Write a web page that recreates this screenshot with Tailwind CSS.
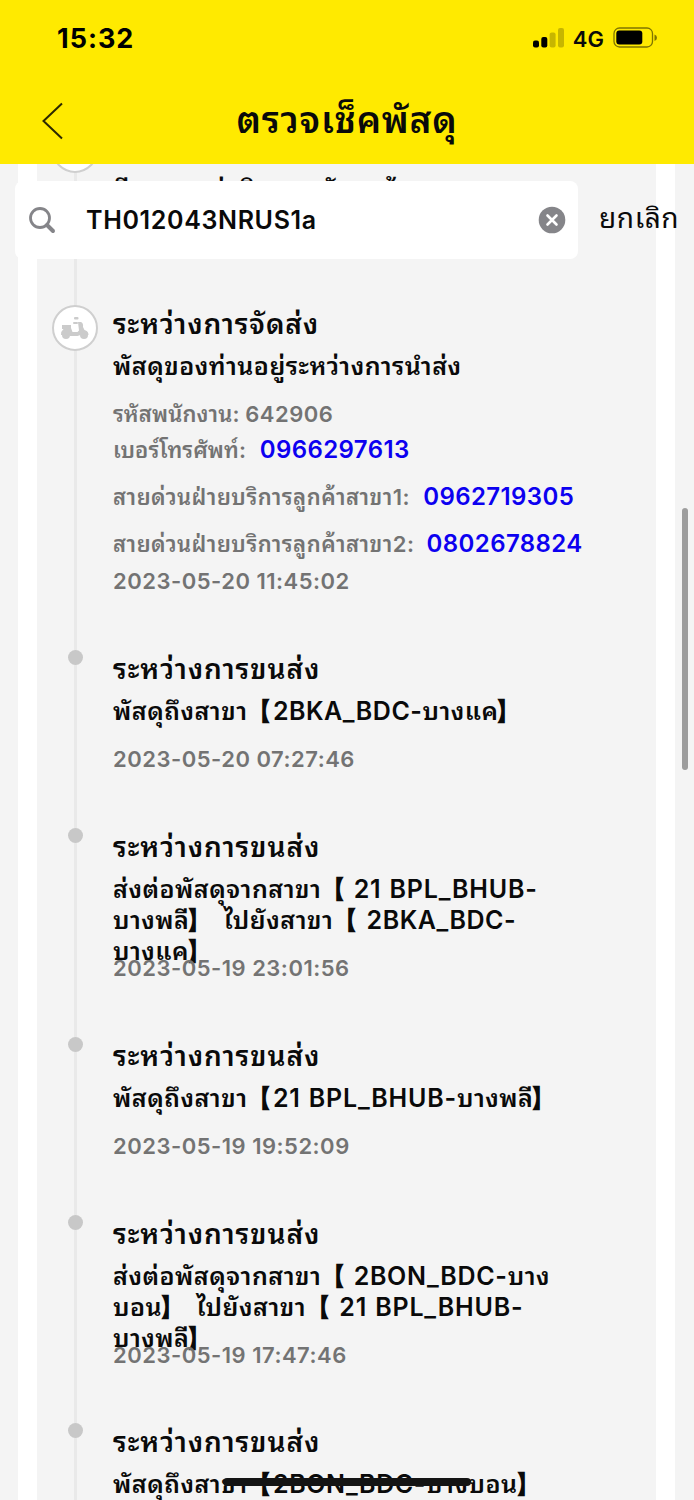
<!DOCTYPE html>
<html lang="th">
<head>
  <meta charset="UTF-8">
  <meta name="viewport" content="width=device-width, initial-scale=1.0">
  <title>ตรวจเช็คพัสดุ</title>
  <script src="https://cdn.jsdelivr.net/npm/@tailwindcss/browser@4"></script>
</head>
<body class="bg-[#f4f4f4] w-[694px] h-[1500px] overflow-hidden relative font-['Inter','Noto_Sans_Thai_Looped','Loma','Noto_Sans_Thai','Noto_Sans',sans-serif] text-[#0a0a0a]">
<!-- Header -->
<header class="relative z-20 h-[164px] bg-[#ffea00]">
  <div class="flex items-center justify-between h-[76px] pl-[57px] pr-[36px]">
    <span class="mt-[2px] text-[27px] font-bold tracking-[1px] text-black">15:32</span>
    <div class="flex items-center">
      <svg class="w-[32px] h-[20px]" viewBox="0 0 32 20">
        <rect x="0" y="12.5" width="6" height="7" rx="2" />
        <rect x="8.3" y="9" width="6" height="10.500" rx="2" />
        <rect x="16.600" y="4.500" width="6" height="15" rx="2" opacity=".22" />
        <rect x="25" y="0" width="6" height="19.500" rx="2" opacity=".22" />
      </svg>
      <span class="ml-[8px] mt-[2px] text-[22px] font-semibold">4G</span>
      <svg class="ml-[9px] w-[45px] h-[22px]" viewBox="0 0 45 22">
        <rect x="1" y="1" width="38.500" height="19" rx="5.500" fill="none" stroke="#000" stroke-opacity=".5" stroke-width="1.300" />
        <rect x="3.300" y="3.500" width="26" height="14" rx="3" />
        <path d="M41.500 7.500q2.500 1 2.500 3.200t-2.500 3.200z" opacity=".5" />
      </svg>
    </div>
  </div>
  <div class="relative flex items-center justify-center h-[88px]">
    <svg class="absolute left-[40px] top-[25px] w-[24px] h-[40px]" viewBox="0 0 24 40" fill="none" stroke="#2c2800" stroke-width="2">
      <path d="M22 2.500 3.500 20 22 37.500" />
    </svg>
    <h1 class="text-[37px] leading-[48px] font-semibold tracking-[0.7px]">ตรวจเช็คพัสดุ</h1>
  </div>
</header>

<!-- Search -->
<div class="absolute z-10 left-[15px] top-[181px] flex items-center">
  <div class="flex items-center w-[563px] h-[78px] rounded-lg bg-white pl-[13px] pr-[12px]">
    <svg class="w-[28px] h-[28px]" viewBox="0 0 28 28" fill="none" stroke="#858589">
      <circle cx="12" cy="12" r="9.500" stroke-width="2.800" />
      <path d="M19 19l6 6" stroke-width="4" stroke-linecap="round" />
    </svg>
    <span class="ml-[30px] mt-[2px] flex-1 text-[25px] font-semibold tracking-[0.65px]">TH012043NRUS1a</span>
    <svg class="w-[28px] h-[28px]" viewBox="0 0 28 28">
      <circle cx="14" cy="14" r="13.300" fill="#858589" />
      <path d="M9.500 9.500l9 9M18.500 9.500l-9 9" stroke="#fff" stroke-width="2.600" stroke-linecap="round" />
    </svg>
  </div>
  <span class="ml-[21px] mb-[4px] text-[28px] font-normal tracking-[0.6px] whitespace-nowrap">ยกเลิก</span>
</div>

<!-- Timeline -->
<main class="h-[1336px] mx-[18px] w-[657px] px-[19px] bg-white overflow-hidden">
  <div class="h-full flow-root bg-[#f4f4f4]">
    <ul class="-mt-[38px] whitespace-nowrap tracking-[0.5px]">
      <li class="flex h-[177px]">
        <div class="relative w-[76px] flex justify-center">
          <div class="w-[3px] h-full bg-[#e9e9e9]"></div>
          <div class="absolute top-[1px] w-[46px] h-[46px] rounded-full border-2 border-[#cfcfcf] bg-white"></div>
        </div>
        <div class="pt-[48px]">
          <p class="text-[25px] leading-[31px] font-semibold">มีรายการส่งสินราคาวันมาค้าง</p>
        </div>
      </li>
      <li class="flex h-[345px]">
        <div class="relative w-[76px] flex justify-center">
          <div class="w-[3px] h-full bg-[#e9e9e9]"></div>
          <div class="absolute top-[2px] w-[46px] h-[46px] rounded-full border-2 border-[#cfcfcf] bg-white flex items-center justify-center">
            <svg class="w-[30px] h-[26px]" viewBox="0 0 30 26" fill="#cbcbcb">
              <rect x="14" y="2" width="4.500" height="2.500" rx="1" />
              <rect x="13" y="7" width="5" height="2" rx="1" />
              <path d="M18 7h3q2.500 1 2 5l1.500 3q4 1 4 5h-8l-3 1h-7.500l-1-1H1q0-4 2.500-6H2V10h9v3l1.500 4h5l1.500-1.500z" />
              <circle cx="6" cy="20" r="4" />
              <circle cx="24" cy="20" r="4" />
            </svg>
          </div>
        </div>
        <div>
          <h2 class="text-[28px] leading-[42px] font-semibold tracking-[0.9px]">ระหว่างการจัดส่ง</h2>
          <p class="mt-[6px] h-[49px] text-[25px] leading-[31px] font-semibold">พัสดุของท่านอยู่ระหว่างการนำส่ง</p>
          <div class="text-[22px] leading-[28px] font-semibold text-[#737373]">
            <p class="tracking-[0.1px]">รหัสพนักงาน: <span class="tracking-[0.5px]">642906</span></p>
            <p class="mt-[8px] tracking-[0.1px]">เบอร์โทรศัพท์: <a class="ml-[8px] text-[24px] tracking-[0.4px] text-[#0c00f0]">0966297613</a></p>
            <p class="mt-[19px]">สายด่วนฝ่ายบริการลูกค้าสาขา1: <a class="ml-[7px] text-[24px] tracking-[0.4px] text-[#0c00f0]">0962719305</a></p>
            <p class="mt-[19px]">สายด่วนฝ่ายบริการลูกค้าสาขา2: <a class="ml-[6px] text-[24px] tracking-[0.4px] text-[#0c00f0]">0802678824</a></p>
            <p class="mt-[9px]">2023-05-20 11:45:02</p>
          </div>
        </div>
      </li>
      <li class="flex h-[178px]">
        <div class="relative w-[76px] flex justify-center">
          <div class="w-[3px] h-full bg-[#e9e9e9]"></div>
          <div class="absolute top-[2px] size-[15px] rounded-full bg-[#c8c8c8]"></div>
        </div>
        <div>
          <h2 class="text-[28px] leading-[42px] font-semibold tracking-[1px]">ระหว่างการขนส่ง</h2>
          <p class="mt-[6px] h-[49px] text-[25px] leading-[31px] font-semibold">พัสดุถึงสาขา【2BKA_BDC-บางแค<span class="-ml-[3px]">】</span></p>
          <p class="text-[22px] leading-[28px] font-semibold text-[#737373]">2023-05-20 07:27:46</p>
        </div>
      </li>
      <li class="flex h-[208.5px]">
        <div class="relative w-[76px] flex justify-center">
          <div class="w-[3px] h-full bg-[#e9e9e9]"></div>
          <div class="absolute top-[2px] size-[15px] rounded-full bg-[#c8c8c8]"></div>
        </div>
        <div>
          <h2 class="text-[28px] leading-[42px] font-semibold tracking-[1px]">ระหว่างการขนส่ง</h2>
          <p class="mt-[6px] h-[80px] text-[25px] leading-[31px] font-semibold">ส่งต่อพัสดุจากสาขา【 <span class="tracking-[0.8px] [word-spacing:1px]">21 BPL_BHUB-</span><br>บางพลี<span class="-ml-[3px] mr-[5px]">】</span> ไปยังสาขา【 <span class="ml-[1px]">2BKA_BDC-</span><br>บางแค<span class="-ml-[3px]">】</span></p>
          <p class="text-[22px] leading-[28px] font-semibold text-[#737373]">2023-05-19 23:01:56</p>
        </div>
      </li>
      <li class="flex h-[178px]">
        <div class="relative w-[76px] flex justify-center">
          <div class="w-[3px] h-full bg-[#e9e9e9]"></div>
          <div class="absolute top-[2px] size-[15px] rounded-full bg-[#c8c8c8]"></div>
        </div>
        <div>
          <h2 class="text-[28px] leading-[42px] font-semibold tracking-[1px]">ระหว่างการขนส่ง</h2>
          <p class="mt-[6px] h-[49px] text-[25px] leading-[31px] font-semibold">พัสดุถึงสาขา【<span class="tracking-[0.8px] [word-spacing:1px]">21 BPL_BHUB-</span>บางพลี<span class="-ml-[3px]">】</span></p>
          <p class="text-[22px] leading-[28px] font-semibold text-[#737373]">2023-05-19 19:52:09</p>
        </div>
      </li>
      <li class="flex h-[208.5px]">
        <div class="relative w-[76px] flex justify-center">
          <div class="w-[3px] h-full bg-[#e9e9e9]"></div>
          <div class="absolute top-[2px] size-[15px] rounded-full bg-[#c8c8c8]"></div>
        </div>
        <div>
          <h2 class="text-[28px] leading-[42px] font-semibold tracking-[1px]">ระหว่างการขนส่ง</h2>
          <p class="mt-[6px] h-[80px] text-[25px] leading-[31px] font-semibold">ส่งต่อพัสดุจากสาขา【 <span class="tracking-[0.7px]">2BON_BDC-</span>บาง<br>บอน<span class="-ml-[3px] mr-[5px]">】</span> ไปยังสาขา【 <span class="ml-[1px] tracking-[0.8px] [word-spacing:1px]">21 BPL_BHUB-</span><br>บางพลี<span class="-ml-[3px]">】</span></p>
          <p class="text-[22px] leading-[28px] font-semibold text-[#737373]">2023-05-19 17:47:46</p>
        </div>
      </li>
      <li class="flex h-[178px]">
        <div class="relative w-[76px] flex justify-center">
          <div class="w-[3px] h-full bg-[#e9e9e9]"></div>
          <div class="absolute top-[2px] size-[15px] rounded-full bg-[#c8c8c8]"></div>
        </div>
        <div>
          <h2 class="text-[28px] leading-[42px] font-semibold tracking-[1px]">ระหว่างการขนส่ง</h2>
          <p class="mt-[6px] h-[49px] text-[25px] leading-[31px] font-semibold">พัสดุถึงสาขา【<span class="tracking-[0.6px]">2BON_BDC-</span>บางบอน<span class="-ml-[3px]">】</span></p>
        </div>
      </li>
    </ul>
  </div>
</main>

<!-- Scrollbar and home indicator -->
<div class="absolute left-[682px] top-[508px] w-[6px] h-[262px] rounded-full bg-[#9d9d9d]"></div>
<div class="absolute left-[223px] top-[1478px] w-[248px] h-[8px] rounded-full bg-[#141414]"></div>
</body>
</html>
